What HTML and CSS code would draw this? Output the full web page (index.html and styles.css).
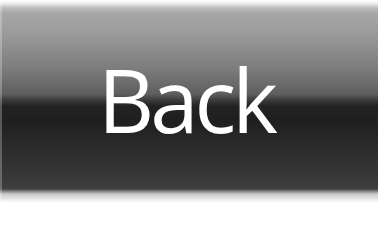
FILE: index.html
```html
<!DOCTYPE html>
<html lang="en">
<head>
<meta charset="utf-8">
<title>Back</title>
<link rel="stylesheet" href="styles.css">
</head>
<body>
<div class="btn"><span class="label">Back</span></div>
</body>
</html>
```
FILE: styles.css
```css
html, body {
  margin: 0;
  padding: 0;
  width: 378px;
  height: 202px;
  overflow: hidden;
  background: #fff;
}
.btn {
  width: 378px;
  height: 202px;
  display: flex;
  align-items: center;
  justify-content: center;
  background: linear-gradient(to bottom,
    #ffffff 0px,
    #f2f2f2 3px,
    #bcbcbc 8px,
    #a6a6a6 14px,
    #9d9d9d 30px,
    #7b7b7b 70px,
    #5e5e5e 94px,
    #3c3c3c 100px,
    #232323 106px,
    #1f1f1f 120px,
    #393939 180px,
    #404040 189px,
    #7c7c7c 191px,
    #c8c8c8 194px,
    #fafafa 202px);
  box-shadow: inset 2px 0 0 rgba(255,255,255,0.25);
}
.label {
  font-family: "Open Sans", "Noto Sans", sans-serif;
  font-size: 87px;
  font-weight: 500;
  line-height: 1;
  color: #ffffff;
  letter-spacing: -4px;
  position: relative;
  top: -2px;
  left: -3px;
}
```
